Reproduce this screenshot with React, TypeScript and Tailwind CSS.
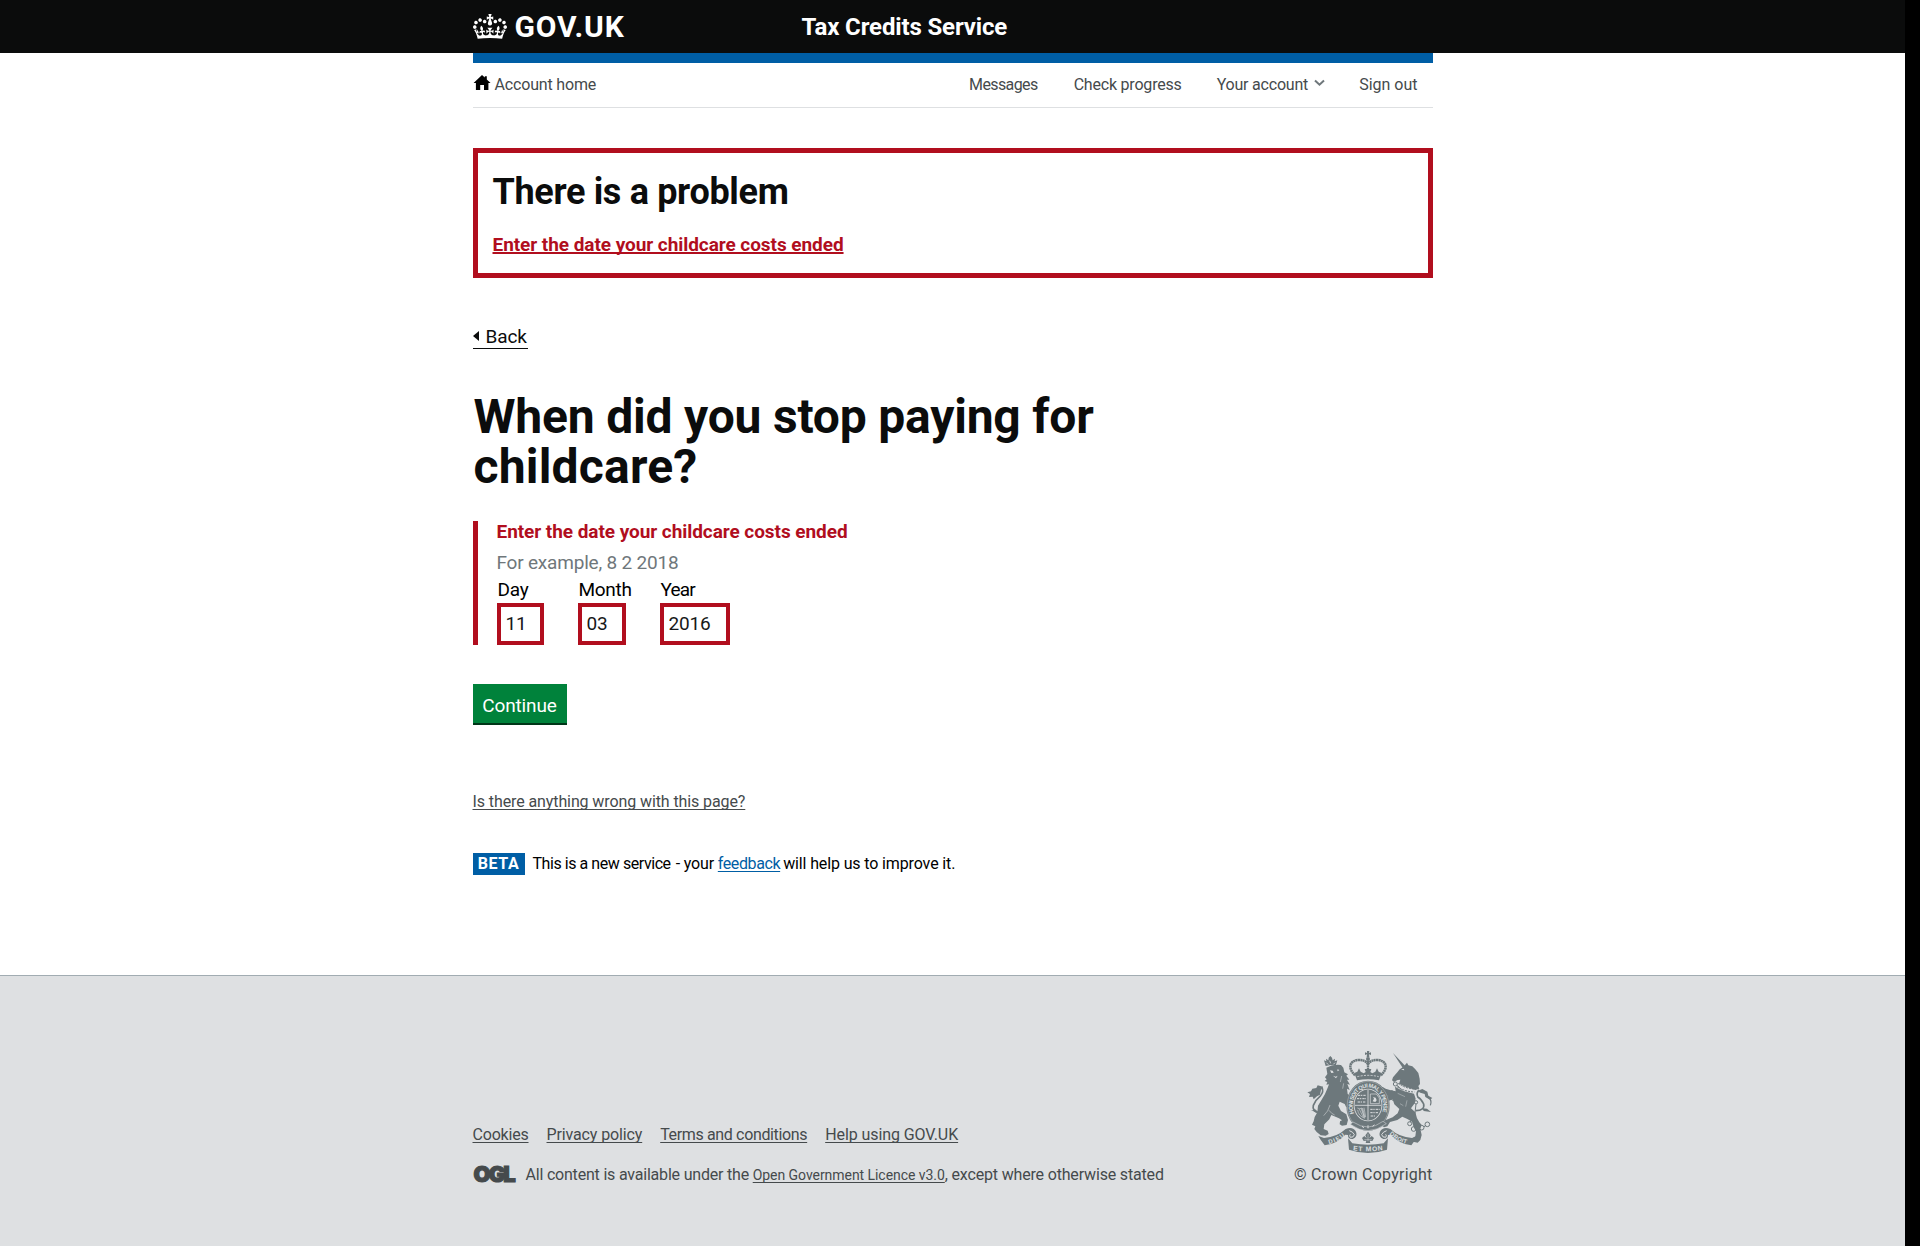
import React from "react";

const CROWN =
  "M25 30.2c3.5 1.5 7.7-.2 9.1-3.7 1.5-3.6-.2-7.8-3.9-9.2-3.6-1.4-7.6.3-9.1 3.9-1.4 3.5.3 7.5 3.9 9zM9 39.5c3.6 1.5 7.8-.2 9.2-3.7 1.5-3.6-.2-7.8-3.9-9.1-3.6-1.5-7.6.2-9.1 3.8-1.4 3.5.3 7.5 3.8 9zM4.4 57.2c3.5 1.5 7.7-.2 9.1-3.8 1.5-3.6-.2-7.7-3.9-9.1-3.5-1.5-7.6.3-9.1 3.8-1.4 3.5.3 7.6 3.9 9.1zm38.3-21.4c3.5 1.5 7.7-.2 9.1-3.8 1.5-3.6-.2-7.7-3.9-9.1-3.6-1.5-7.6.3-9.1 3.8-1.3 3.6.4 7.7 3.9 9.1zm64.4-5.6c-3.6 1.5-7.8-.2-9.1-3.7-1.5-3.6.2-7.8 3.8-9.2 3.6-1.4 7.7.3 9.2 3.9 1.3 3.5-.4 7.5-3.9 9zm15.9 9.3c-3.6 1.5-7.7-.2-9.1-3.7-1.5-3.6.2-7.8 3.7-9.1 3.6-1.5 7.7.2 9.2 3.8 1.5 3.5-.3 7.5-3.8 9zm4.7 17.7c-3.6 1.5-7.8-.2-9.2-3.8-1.5-3.6.2-7.7 3.9-9.1 3.6-1.5 7.7.3 9.2 3.8 1.3 3.5-.4 7.6-3.9 9.1zM89.3 35.8c-3.6 1.5-7.8-.2-9.2-3.8-1.4-3.6.2-7.7 3.9-9.1 3.6-1.5 7.7.3 9.2 3.8 1.4 3.6-.3 7.7-3.9 9.1zM69.7 17.7l8.9 4.7V9.3l-8.9 2.8c-.2-.3-.5-.6-.9-.9L72.4 0H59.6l3.5 11.2c-.3.3-.6.5-.9.9l-8.8-2.8v13.1l8.8-4.7c.3.3.6.7.9.9l-5 15.4v.1c-.2.8-.4 1.6-.4 2.4 0 4.1 3.1 7.5 7 8.1h.2c.3 0 .7.1 1 .1.4 0 .7 0 1-.1h.2c4-.6 7.1-4.1 7.1-8.1 0-.8-.1-1.7-.4-2.4V34l-5.1-15.4c.4-.2.7-.6 1-.9zM66 92.8c16.9 0 32.8 1.1 47.1 3.2 4-16.9 8.9-26.7 14-33.5l-9.6-3.4c1 4.9 1.1 7.2 0 10.2-1.5-1.4-3-4.3-4.2-8.7L108.6 76c2.8-2 5-3.2 7.5-3.3-4.4 9.4-10 11.9-13.6 11.2-4.3-.8-6.3-4.6-5.6-7.9 1-4.7 5.7-5.9 8-.5 4.3-8.7-3-11.4-7.6-8.8 7.1-7.2 7.9-13.5 2.1-21.1-8 6.1-8.1 12.3-4.5 20.8-4.7-5.4-12.1-2.5-9.5 6.2 3.4-5.2 7.9-2 7.2 3.1-.6 4.3-6.4 7.8-13.5 7.2-10.3-.9-10.9-8-11.2-13.8 2.5-.5 7.1 1.8 11 7.3L80.2 60c-4.1 4.4-8 5.3-12.3 5.4 1.4-4.4 8-11.6 8-11.6H55.5s6.4 7.2 7.9 11.6c-4.2-.1-8-1-12.3-5.4l1.4 16.4c3.9-5.5 8.5-7.7 10.9-7.3-.3 5.8-.9 12.8-11.1 13.8-7.2.6-12.9-2.9-13.5-7.2-.7-5 3.8-8.3 7.1-3.1 2.7-8.7-4.6-11.6-9.4-6.2 3.7-8.5 3.6-14.7-4.6-20.8-5.8 7.6-5 13.9 2.2 21.1-4.7-2.6-11.9.1-7.7 8.8 2.3-5.5 7.1-4.2 8.1.5.7 3.3-1.3 7.1-5.7 7.9-3.5.7-9-1.8-13.5-11.2 2.5.1 4.7 1.3 7.5 3.3l-4.7-15.4c-1.2 4.4-2.7 7.2-4.3 8.7-1.1-3-.9-5.3 0-10.2l-9.5 3.4c5 6.9 9.9 16.7 14 33.5 14.8-2.1 30.8-3.2 47.7-3.2z";

const INK = "#6d787c";
const PAPER = "#dee0e2";

function Crest() {
  return (
    <svg width="127" height="104" viewBox="81 60 381 312" fill={INK} className="block">
      <defs>
        <path id="garter" d="M225 250A46 55 0 1 1 309 250" />
        <path id="left-scroll" d="M150 342Q181 335 203 312" />
        <path id="mid-scroll" d="M222 361Q267 367 313 360" />
        <path id="right-scroll" d="M331 312Q353 335 384 342" />
      </defs>

      {/* lion */}
      <path d="M140 108L135 91l7 3-1-8 7 5 1-8 5-5 5 5 2 8 7-5-1 8 8-3-5 17-15-3z" />
      <path d="M142 98l6 6M152 92l3 8M168 98l-5 5" stroke={PAPER} strokeWidth="2.5" />
      <path d="M142 113l14-6 20-3 10 1 7 8 3 14 11 6-5 4 9 12-7 0 9 15-8-2 7 18-8-4 2 16 12 10-5 2 10 10-8 2 6 9-9 0-1 8-10-3-4-8-15-7-4 12 8 16 16 10 5 17-4 15-14 2-7-4 1-9 6-3-9-6-23-10-6 13-15 15-2 14 12 5 3 10-9 5-15-1-12-10-7-9 3-8-10-5 5-10 3-13 8-14 2-20 9-15 12-20 8-19 4-10-8 1 3-8-8-3 6-5-5-6 7-10z" />
      <path d="M153 121l8 1 3 6-7 1zM176 117l5 4-6 3zM162 137l8 3 6-3-5 8z" fill={PAPER} />
      <path d="M134 257q14-12 19-32M150 241q8 11 17 14M188 138l-4 18M194 160l-3 16" stroke={PAPER} strokeWidth="1.5" fill="none" />
      <path d="M122 249q-24-4-19-23 6-16 20-27 13-14 5-28" fill="none" stroke={INK} strokeWidth="5" />
      <path d="M132 170l-16-4-4 8-12 2-4 8-11 3 8 5-3 9 11-1 3 8 10-9 9-5 3-14z" />
      <path d="M122 249q-9-5-12-2l-14-7 11 1-6-9z" />

      {/* unicorn */}
      <path d="M342 69l36 38-7 6z" />
      <path d="M369 113l9-8 6-7 4 8 12 3 9 9 9 11 4 17 1 16-5 6 3 8-12 4-29-10-20-9 4-12-8 1-11 6-6-5 3-9 13-15 7-9z" />
      <path d="M366 119l8-3 2 5z" fill={PAPER} />
      <path d="M357 160q25 17 53 17M354 170q24 15 52 16" stroke={INK} strokeWidth="3" strokeDasharray="6 3" fill="none" />
      <path d="M348 170l22 12 35 9 5 15-3 14-11 15 13 12 5 18 7 12 7 8-4 11 4 19-4 15-8 8-14-3-5-8 12-8 2-15-7-12-5-17-14-8-15-7-15 10-22 6-8 13-10 3-8-7 6-12 13-5 15-6 15-12 5-13-15-14-5-15-13 5-2 14-6 8-8-10 5-9-1-11 12-7-21-8-9-10 3-7 10-2 9 5 15 5 15 3z" />
      <path d="M356 190l22 10M384 211l-4 19M363 221l10 6" stroke={PAPER} strokeWidth="1.2" />
      <path d="M410 242q28-1 24-20-7-15-17-20-7-13 4-22" fill="none" stroke={INK} strokeWidth="5" />
      <path d="M415 183l15-6 15 8 3 12 12 7-7 5-14-8-2-9-13-4zM430 235l14 1 12 10-22-3z" />
      <path d="M447 201q13 8 7 25" fill="none" stroke={INK} strokeWidth="3.5" />
      <g fill="none" stroke={INK} strokeWidth="3">
        <circle cx="349" cy="162" r="6" />
        <circle cx="338" cy="187" r="5" />
        <circle cx="343" cy="205" r="6" />
        <circle cx="411" cy="217" r="5" />
        <circle cx="392" cy="281" r="6" />
        <circle cx="404" cy="297" r="7" />
        <circle cx="428" cy="293" r="7" />
        <circle cx="445" cy="283" r="7" />
        <path d="M355 166l20 22 32 24M411 222l-4 35-14 20M411 299h10M435 290l5-3" />
      </g>

      {/* crown */}
      <path d="M264 63h7l-1 6 6-2v8l-6-2 1 9h-8l1-9-6 2v-8l6 2z" />
      <circle cx="267" cy="87" r="6" />
      <g fill="none" stroke={INK} strokeWidth="7.5" strokeDasharray="6 1">
        <path d="M228 136C204 112 213 92 238 90q20-1 29 12" />
        <path d="M306 136C330 112 321 92 296 90q-20-1-29 12" />
      </g>
      <path d="M267 92v28" stroke={INK} strokeWidth="7" strokeDasharray="6 1" />
      <path d="M226 129l9-4 5-10 5 10 9 5 6-4-3-9h20l-3 9 6 4 9-5 5-10 5 10 9 4-8 22q-33-7-66 0z" />
      <path d="M235 140q32-8 64 0" stroke={PAPER} strokeWidth="2.5" strokeDasharray="6 4" fill="none" />

      {/* garter and shield */}
      <ellipse cx="267" cy="227" rx="65" ry="75" />
      <ellipse cx="267" cy="227" rx="62.500" ry="72.500" fill="none" stroke={PAPER} strokeWidth="1" />
      <text fontFamily="Liberation Sans" fontWeight="700" fontSize="17" fill={PAPER}>
        <textPath href="#garter" textLength="200" lengthAdjust="spacing">HONI SOIT QUI MAL Y PENSE</textPath>
      </text>
      <ellipse cx="267" cy="225" rx="43" ry="49" fill={PAPER} />
      <ellipse cx="267" cy="225" rx="40.500" ry="46.500" />
      <path d="M267 180v90M228 226h78" stroke={PAPER} strokeWidth="2.5" />
      <path d="M237 196h24M234 206h27M236 216h25M274 238h28M274 248h25M275 258h16" stroke={PAPER} strokeWidth="3" strokeDasharray="7 2 4 3" />
      <path d="M274 192h18l9 12v17h-27z" fill="none" stroke={PAPER} strokeWidth="2" />
      <path d="M281 214l4-8-3-5 8 2 3 8-4 5z" fill={PAPER} />
      <path d="M235 234q8 5 14 0l6 28M240 236l13 26M246 235l11 28M251 234l7 28M255 233l5 28M236 240q2 18 22 25" stroke={PAPER} strokeWidth="1.6" fill="none" />
      <path d="M222 276q46 31 90-2l10 7q-55 41-108 2z" stroke={PAPER} strokeWidth="1.5" />
      <path d="M250 288l4 6M267 286v9M281 290l5-6" stroke={PAPER} strokeWidth="3" />

      {/* scroll */}
      <path d="M118 318l17 6q39-3 65-27 22-8 31 8 6 15-10 22-15 1-14-12l-8-1q-26 28-62 32-12-15-19-28z" />
      <path d="M416 318l-17 6q-39-3-65-27-22-8-31 8-6 15 10 22 15 1 14-12l8-1q26 28 62 32 12-15 19-28z" />
      <path d="M211 302q11 3 15 12-2 9-12 8-4-5 0-9M323 302q-11 3-15 12 2 9 12 8 4-5 0-9" fill="none" stroke={PAPER} strokeWidth="3" />
      <path d="M207 325l13 15q47 8 94 0l13-15-3 34q-57 20-114 0z" />
      <path d="M267 305l8 11-4 9 7-7 7 6-5 9-8-1 2 7h-14l2-7-8 1-5-9 7-6 7 7-4-9z" />
      <path d="M267 311v23M256 329h22" stroke={PAPER} strokeWidth="1.5" />
      <g fontFamily="Liberation Sans" fontWeight="700" fill={PAPER}>
        <text fontSize="18"><textPath href="#left-scroll" textLength="54">DIEU</textPath></text>
        <text fontSize="20"><textPath href="#mid-scroll" textLength="90">ET MON</textPath></text>
        <text fontSize="18"><textPath href="#right-scroll" textLength="60">DROIT</textPath></text>
      </g>
    </svg>
  );
}

function DateField({ label, value, box, gap, tracking }: { label: string; value: string; box: string; gap: string; tracking: string }) {
  return (
    <label className={`block ${gap}`}>
      <span className={`block h-[25px] pl-px text-[19px] leading-[23px] text-black ${tracking}`}>{label}</span>
      <input
        defaultValue={value}
        className={`block h-[42px] rounded-none border-4 border-[#b10e1e] bg-white pt-0 pr-0 pb-px pl-[5px] text-[19px] tracking-[-0.15px] text-[#171819] ${box}`}
      />
    </label>
  );
}

const footerLink = "underline decoration-1 underline-offset-2 [text-decoration-skip-ink:none]";

export default function App() {
  return (
    <div className="flex h-[1246px] w-[1920px] overflow-hidden bg-black font-['Roboto',sans-serif] text-[#0b0c0c]">
      <div className="flex w-[1905px] flex-col bg-white">
        <header className="h-[53px] bg-[#0b0c0c]">
          <div className="mx-auto flex h-full w-[960px] items-center text-white">
            <a className="flex w-[329px] items-center">
              <svg width="34" height="25" viewBox="0 0 132 97" fill="#fff" className="-mt-px">
                <path d={CROWN} />
              </svg>
              <span className="ml-[8px] text-[30px] leading-[30px] font-bold tracking-[0.9px]">GOV.UK</span>
            </a>
            <span className="text-[24px] leading-[30px] font-bold tracking-[-0.14px]">Tax Credits Service</span>
          </div>
        </header>

        <main className="mx-auto h-[922px] w-[960px]">
          <div className="h-[10px] bg-[#005ea5]" />
          <nav className="flex h-[45px] items-start justify-between border-b border-[#dee0e2] pt-3 text-[16px] leading-[20px] text-[#454a4c]">
            <a className="flex">
              <svg width="18" height="16" viewBox="0 0 18 16" className="mr-1 block" fill="#000">
                <path d="M9 0l2.8 2.6V1.2h2v3.3L17.600 8h-2.200v7h-4.400v-5H7.200v5H2.900V8H.6z" />
              </svg>
              <span className="tracking-[-0.17px]">Account home</span>
            </a>
            <div className="flex pr-[15px]">
              <a className="mr-[36px] tracking-[-0.6px]">Messages</a>
              <a className="mr-[35px] tracking-[-0.2px]">Check progress</a>
              <a className="mr-[34px] flex tracking-[-0.2px]">
                Your account
                <svg width="11" height="8" viewBox="0 0 11 8" className="mt-[4px] ml-[6px] block" fill="none" stroke="#6f777b" strokeWidth="2">
                  <path d="M1 1.500l4.500 4.200L10 1.500" />
                </svg>
              </a>
              <a>Sign out</a>
            </div>
          </nav>

          <section className="mt-10 h-[130px] border-5 border-[#b10e1e] pt-[19px] pl-[15px]">
            <h2 className="text-[36px] leading-[40px] font-bold tracking-[-0.33px]">There is a problem</h2>
            <a className="mt-[20px] block w-fit text-[19px] leading-[25px] font-bold tracking-[-0.06px] text-[#b10e1e] underline decoration-2 underline-offset-1 [text-decoration-skip-ink:none]">
              Enter the date your childcare costs ended
            </a>
          </section>

          <a className="mt-[46px] flex h-[25px] w-[55px] items-start border-b border-[#0b0c0c] text-[19px] leading-[25px]">
            <svg width="6" height="10" viewBox="0 0 6 10" className="mt-[7px] mr-[7px] block shrink-0">
              <path d="M6 0v10L0 5z" fill="#0b0c0c" />
            </svg>
            <span className="tracking-[-0.1px]">Back</span>
          </a>

          <h1 className="mt-[43px] h-[100px] w-[640px] pl-px text-[48px] leading-[50px] font-bold">
            <span className="block tracking-[-0.2px]">When did you stop paying for</span>
            <span className="block tracking-[0.2px]">childcare?</span>
          </h1>

          <fieldset className="mt-[29px] h-[124px] border-l-5 border-[#b10e1e] pl-[19px] text-[19px] leading-[25px]">
            <span className="block h-[26px] leading-[21px] font-bold tracking-[-0.06px] text-[#b10e1e]">Enter the date your childcare costs ended</span>
            <span className="block h-[31px] leading-[31px] tracking-[-0.2px] text-[#6f777b]">For example, 8 2 2018</span>
            <div className="flex">
              <DateField label="Day" value="11" box="w-[47px]" gap="w-[81px]" tracking="tracking-[-0.2px]" />
              <DateField label="Month" value="03" box="w-[48px]" gap="w-[82px]" tracking="tracking-[-0.3px]" />
              <DateField label="Year" value="2016" box="w-[70px]" gap="w-[70px]" tracking="tracking-[-0.8px]" />
            </div>
          </fieldset>

          <button className="mt-[39px] block h-[39px] w-[94px] bg-[#00823b] text-[19px] leading-[43px] tracking-[-0.15px] text-white shadow-[0_2px_0_#003618]">
            Continue
          </button>

          <a className="mt-[69px] block w-fit text-[16px] leading-[20px] tracking-[-0.1px] text-[#454a4c] underline decoration-1 underline-offset-2 [text-decoration-skip-ink:none]">
            Is there anything wrong with this page?
          </a>

          <div className="mt-[41px] flex h-[22px] items-center text-[16px] leading-[22px] text-black">
            <strong className="mr-2 block h-[22px] w-[52px] bg-[#005ea5] text-center tracking-[0.55px] text-white">BETA</strong>
            <span className="tracking-[-0.44px]">This is a new service</span>
            <span className="ml-[5px] tracking-[-0.15px]">- your&nbsp;</span>
            <a className="tracking-[-0.4px] text-[#005ea5] underline decoration-1 underline-offset-2 [text-decoration-skip-ink:none]">feedback</a>
            <span className="ml-[3px] tracking-[-0.13px]">will help us to improve it.</span>
          </div>
        </main>

        <footer className="flex-1 border-t border-[#a1acb2] bg-[#dee0e2] text-[16px] leading-[20px] text-[#454a4c]">
          <div className="mx-auto flex w-[960px] justify-between">
            <div className="pt-[149px]">
              <div className="flex">
                <a className={`mr-[18px] tracking-[-0.2px] ${footerLink}`}>Cookies</a>
                <a className={`mr-[18px] tracking-[-0.13px] ${footerLink}`}>Privacy policy</a>
                <a className={`mr-[18px] tracking-[-0.355px] ${footerLink}`}>Terms and conditions</a>
                <a className={`tracking-[-0.08px] ${footerLink}`}>Help using GOV.UK</a>
              </div>
              <div className="mt-5 flex">
                <span className="block h-5 w-[53px] pl-px font-['Inter',sans-serif] text-[22px] leading-[18px] font-black tracking-[-1.9px] [-webkit-text-stroke:1.200px_#454a4c]">OGL</span>
                <span className="tracking-[-0.2px]">All content is available under the&nbsp;</span>
                <a className={`text-[14px] tracking-[-0.05px] ${footerLink}`}>Open Government Licence v3.0</a>
                <span className="tracking-[-0.17px]">, except where otherwise stated</span>
              </div>
            </div>
            <div className="flex flex-col items-end pt-[74px]">
              <Crest />
              <span className="mt-[11px] tracking-[0.23px]">© Crown Copyright</span>
            </div>
          </div>
        </footer>
      </div>
    </div>
  );
}
